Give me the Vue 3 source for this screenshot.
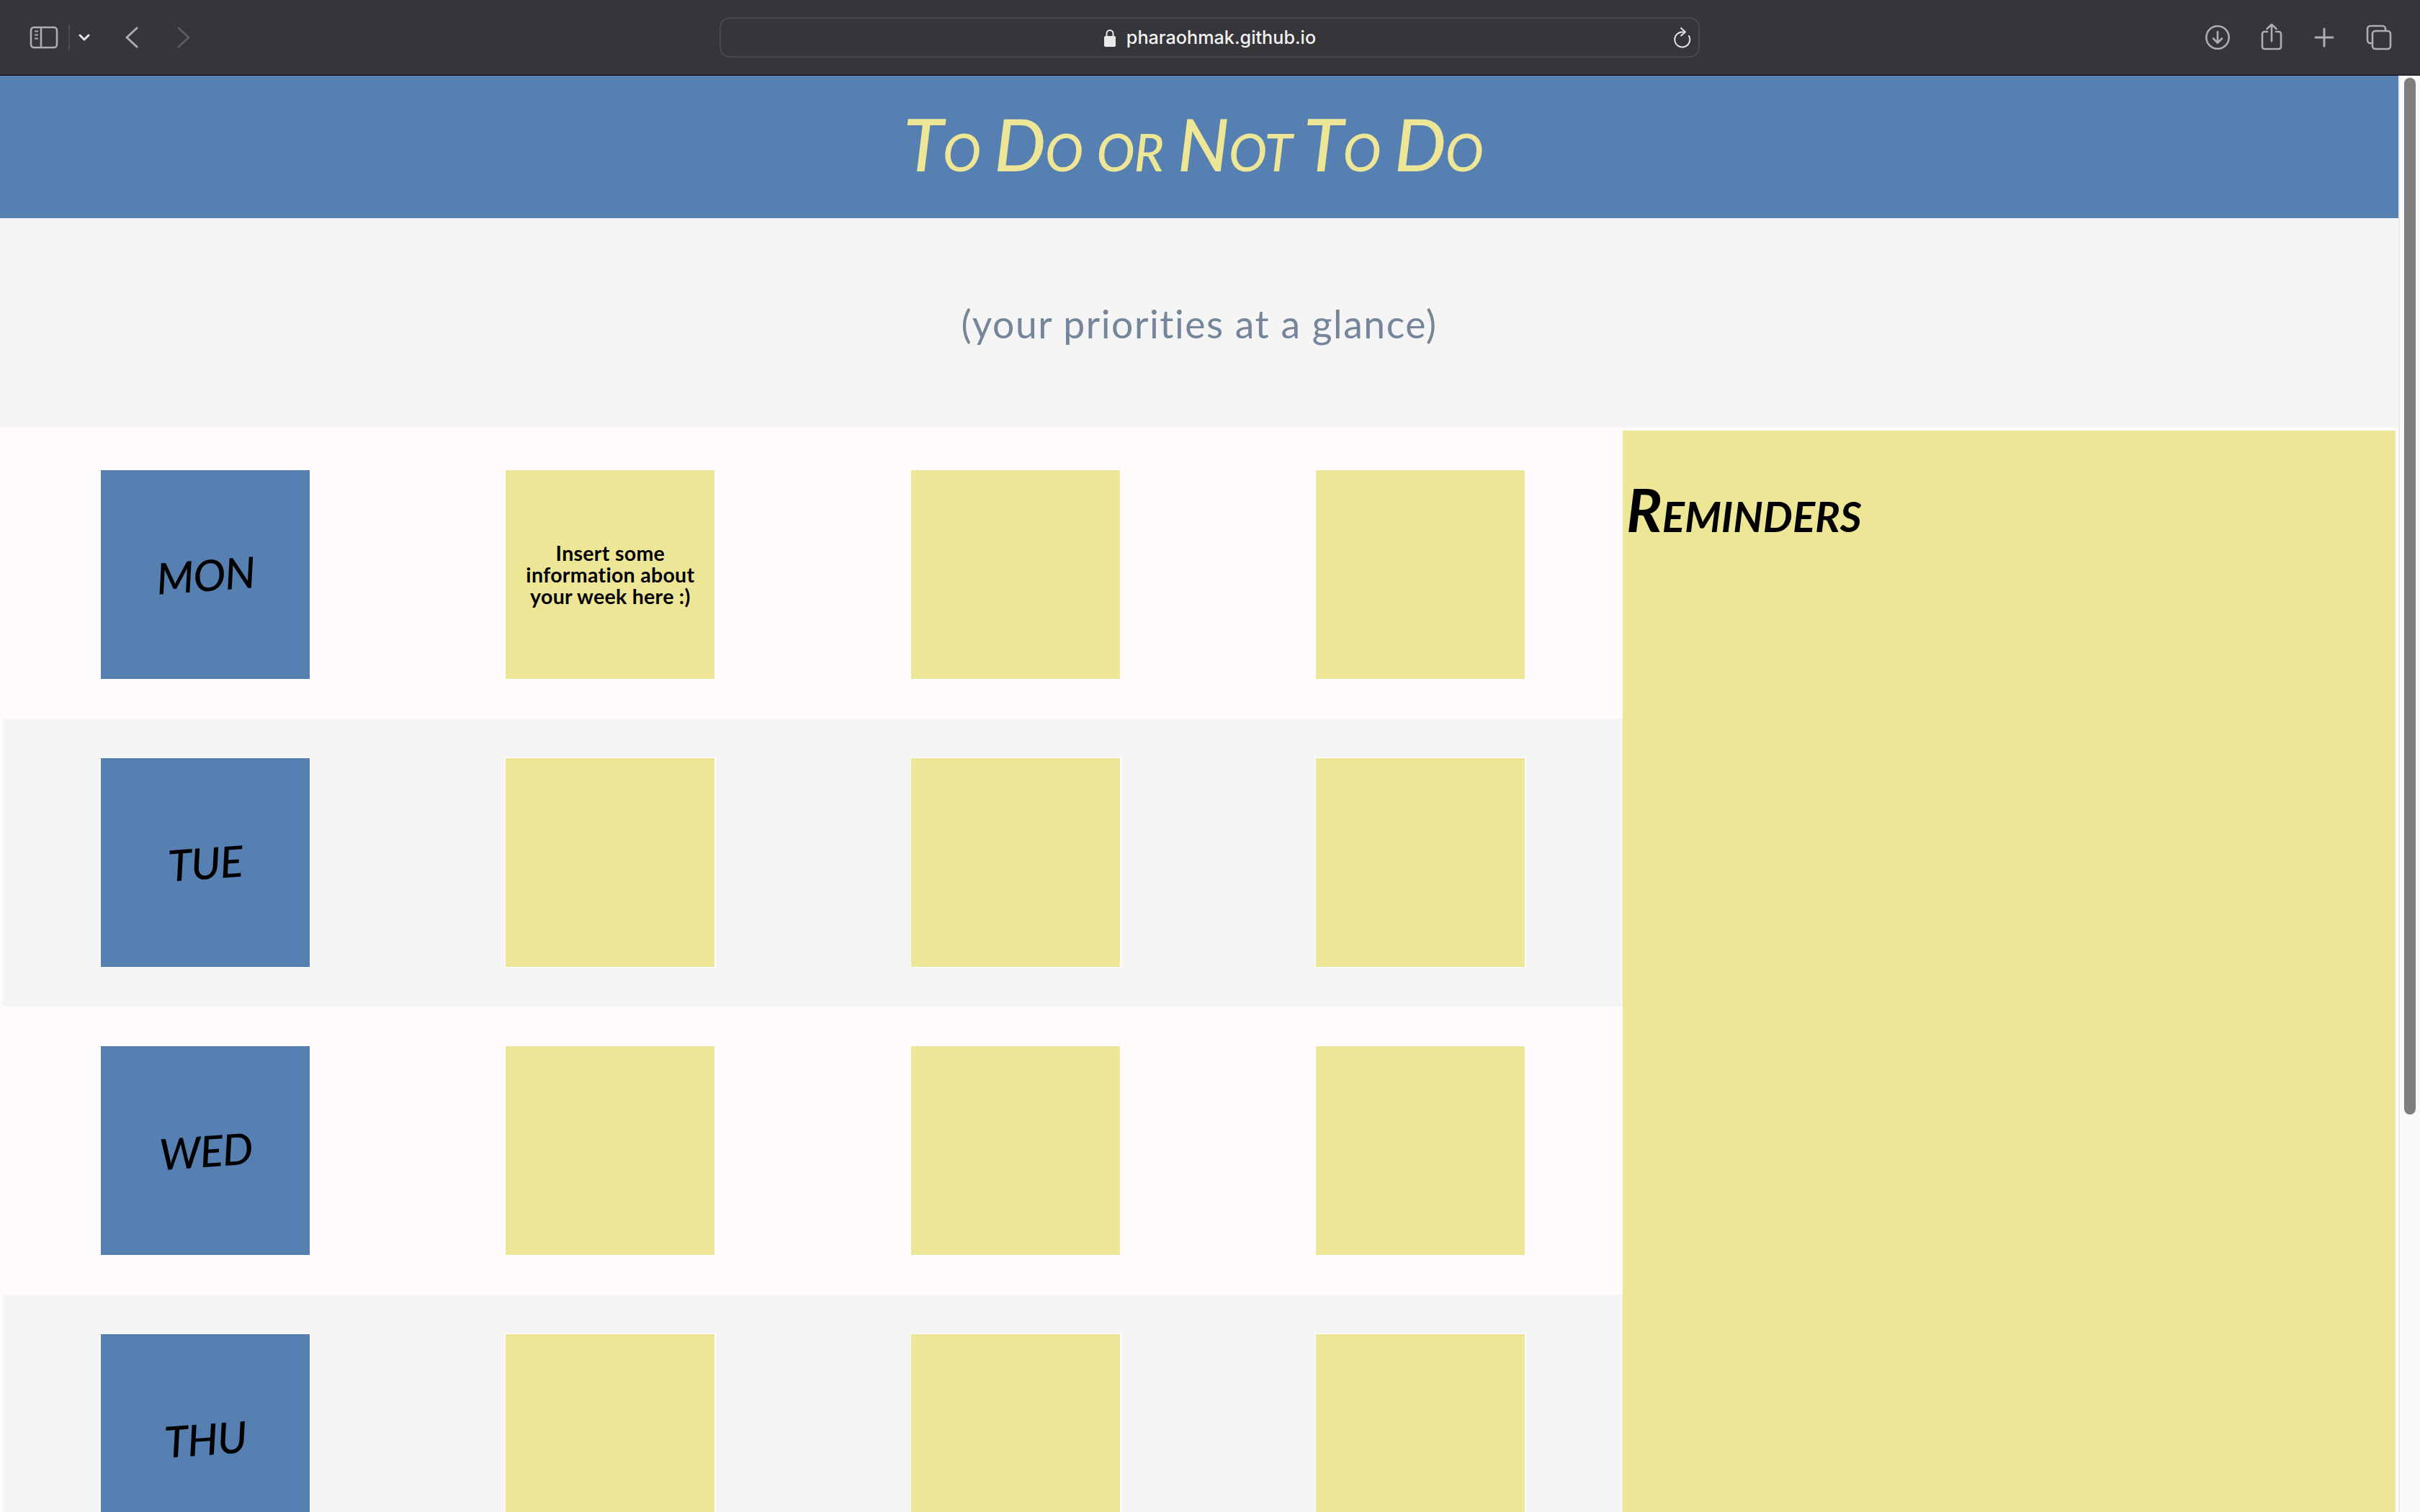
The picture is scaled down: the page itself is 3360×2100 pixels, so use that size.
<script setup>
const days = ['MON', 'TUE', 'WED', 'THU']
</script>

<template>
  <div class="window">
    <header class="toolbar">
      <div class="nav">
        <svg class="ico-sidebar" width="40" height="32" viewBox="0 0 40 32" fill="none" stroke="#aeaeb0" stroke-width="2.6">
          <rect x="2" y="2" width="36" height="28" rx="4" />
          <path d="M16 2v28" />
          <path d="M7 7.500h5M7 12.500h5M7 17.500h5" stroke-width="2" />
        </svg>
        <span class="sep"></span>
        <svg class="ico-chevron" width="16" height="10" viewBox="0 0 16 10" fill="none" stroke="#e4e4e6" stroke-width="3" stroke-linecap="round" stroke-linejoin="round">
          <path d="M2 2l6 6 6-6" />
        </svg>
        <svg class="ico-back" width="18" height="30" viewBox="0 0 18 30" fill="none" stroke="#aeaeb0" stroke-width="3" stroke-linecap="round" stroke-linejoin="round">
          <path d="M16 2L2 15l14 13" />
        </svg>
        <svg class="ico-forward" width="18" height="30" viewBox="0 0 18 30" fill="none" stroke="#5c5c60" stroke-width="3" stroke-linecap="round" stroke-linejoin="round">
          <path d="M2 2l14 13L2 28" />
        </svg>
      </div>
      <div class="address">
        <div class="url">
          <svg width="18" height="25" viewBox="0 0 18 25">
            <path d="M4.500 11V6.500a4.500 4.500 0 0 1 9 0V11" fill="none" stroke="#e8e8e8" stroke-width="2" />
            <rect x="1" y="10" width="16" height="15" rx="2" fill="#e8e8e8" />
          </svg>
          <span>pharaohmak.github.io</span>
        </div>
        <svg class="ico-reload" width="26" height="30" viewBox="0 0 26 30" fill="none" stroke="#e4e4e6" stroke-width="2" stroke-linecap="round" stroke-linejoin="round">
          <path d="M15 7.500A10.500 10.500 0 1 0 23 13" />
          <path d="M12 2l6 5.500-6 5" />
        </svg>
      </div>
      <div class="actions">
        <svg width="36" height="36" viewBox="0 0 36 36" fill="none" stroke="#aeaeb0" stroke-width="2.6" stroke-linecap="round" stroke-linejoin="round">
          <circle cx="18" cy="18" r="15.700" />
          <path d="M18 10v15M12 19.500l6 6 6-6" />
        </svg>
        <svg width="30" height="38" viewBox="0 0 30 38" fill="none" stroke="#aeaeb0" stroke-width="2.6" stroke-linecap="round" stroke-linejoin="round">
          <path d="M9 12H5a3 3 0 0 0-3 3v18a3 3 0 0 0 3 3h20a3 3 0 0 0 3-3V15a3 3 0 0 0-3-3h-4" />
          <path d="M15 25V2M8.500 8L15 2l6.500 6" />
        </svg>
        <svg width="28" height="28" viewBox="0 0 28 28" fill="none" stroke="#aeaeb0" stroke-width="3" stroke-linecap="round">
          <path d="M14 2v24M2 14h24" />
        </svg>
        <svg width="36" height="36" viewBox="0 0 36 36" fill="none" stroke="#aeaeb0" stroke-width="2.6" stroke-linecap="round">
          <path d="M7 26H6a4 4 0 0 1-4-4V6a4 4 0 0 1 4-4h17a4 4 0 0 1 4 4v2" />
          <rect x="9" y="9" width="25" height="25" rx="4" />
        </svg>
      </div>
    </header>

    <div class="viewport">
      <div class="page">
        <div class="banner">
          <h1>To Do or Not To Do</h1>
        </div>
        <div class="tagline">(your priorities at a glance)</div>
        <main class="planner">
          <section class="week">
            <div v-for="(day, i) in days" :key="day" class="row">
              <div class="box day"><span>{{ day }}</span></div>
              <div class="box note">
                <p v-if="i === 0">Insert some information about your week here :)</p>
              </div>
              <div class="box note"></div>
              <div class="box note"></div>
            </div>
          </section>
          <aside class="reminders">
            <h2>Reminders</h2>
          </aside>
        </main>
      </div>
      <div class="scrollbar"><div class="thumb"></div></div>
    </div>
  </div>
</template>

<style scoped>
.window {
  width: 3360px;
  height: 2100px;
  display: flex;
  flex-direction: column;
  overflow: hidden;
  font-family: "Liberation Sans", sans-serif;
}
.toolbar {
  flex: none;
  height: 104px;
  box-sizing: content-box;
  border-bottom: 1px solid #000;
  background: #35353a;
  display: grid;
  grid-template-columns: 999px 1361px 1fr;
  align-items: center;
}
.nav {
  display: flex;
  align-items: center;
  padding-left: 41px;
}
.sep {
  width: 2px;
  height: 36px;
  margin: 0 0 0 14px;
  background: #4c4c50;
}
.ico-chevron { margin-left: 12px; }
.ico-back { margin-left: 49px; }
.ico-forward { margin-left: 54px; }
.address {
  height: 56px;
  box-sizing: border-box;
  border: 2px solid #48484d;
  border-radius: 14px;
  display: grid;
  grid-template-columns: 1fr auto 1fr;
  align-items: center;
}
.url {
  grid-column: 2;
  display: flex;
  align-items: center;
  gap: 14px;
  font-family: Inter, "Liberation Sans", sans-serif;
  font-size: 25.200px;
  font-weight: 500;
  color: #f2f2f2;
  white-space: nowrap;
}
.ico-reload {
  grid-column: 3;
  justify-self: end;
  margin-right: 10px;
}
.actions {
  display: flex;
  align-items: center;
  padding-left: 701px;
}
.actions svg:nth-child(2) { margin-left: 42px; margin-top: -2px; }
.actions svg:nth-child(3) { margin-left: 44px; }
.actions svg:nth-child(4) { margin-left: 44px; }

.viewport {
  flex: 1;
  min-height: 0;
  display: flex;
}
.page {
  flex: 1;
  min-width: 0;
  overflow: hidden;
  background: #fffbfa;
}
.banner {
  height: 198px;
  background: #5680b2;
  display: flex;
  justify-content: center;
  align-items: center;
}
h1 {
  margin: 0 17px 8px 0;
  font-family: Lato, sans-serif;
  font-size: 101.500px;
  font-weight: 500;
  font-style: italic;
  font-variant: small-caps;
  line-height: 1;
  color: #ede696;
  white-space: nowrap;
  letter-spacing: -1px;
  word-spacing: -3px;
}
.tagline {
  height: 291px;
  background: #f5f5f5;
  display: flex;
  justify-content: center;
  align-items: center;
  font-family: Lato, sans-serif;
  font-size: 53.500px;
  letter-spacing: 1.500px;
  color: #76869a;
}
.planner {
  display: flex;
  align-items: flex-start;
  padding: 4px 4px 0;
}
.week { width: 2249px; flex: none; }
.row {
  height: 400px;
  display: grid;
  grid-template-columns: repeat(4, 1fr);
  align-items: center;
  justify-items: center;
}
.row:nth-child(even) { background: #f5f5f5; }
.box {
  width: 292px;
  height: 292px;
  box-sizing: border-box;
  border: 1px solid #fff;
  box-shadow: 1px 0 0 #fff;
  display: flex;
  align-items: center;
  justify-content: center;
  text-align: center;
  color: #000;
}
.day { background: #5680b2; }
.day span {
  font-family: Lato, sans-serif;
  font-size: 60px;
  font-style: italic;
  font-weight: 500;
  letter-spacing: -1px;
  line-height: 1;
  transform: rotate(-4deg);
}
.note { background: #ede696; }
.note p {
  margin: 0;
  width: 250px;
  font-family: Lato, sans-serif;
  font-size: 28.500px;
  font-weight: 700;
  letter-spacing: 0.300px;
  line-height: 30px;
}
.reminders {
  width: 1073px;
  flex: none;
  height: 1600px;
  background: #ede696;
  padding: 68px 5px 0;
  box-sizing: border-box;
}
h2 {
  margin: 0;
  font-family: Lato, sans-serif;
  font-size: 83px;
  font-weight: 700;
  font-style: italic;
  font-variant: small-caps;
  line-height: 1;
  color: #000;
}
.scrollbar {
  flex: none;
  width: 30px;
  box-sizing: border-box;
  background: #fafafa;
  border-left: 2px solid #e9e9e9;
  padding: 3px 6px 0;
}
.thumb {
  width: 16px;
  height: 1440px;
  border-radius: 8px;
  background: #7e7e7e;
}
</style>

<style>
html, body { margin: 0; background: #fffbfa; }
</style>
